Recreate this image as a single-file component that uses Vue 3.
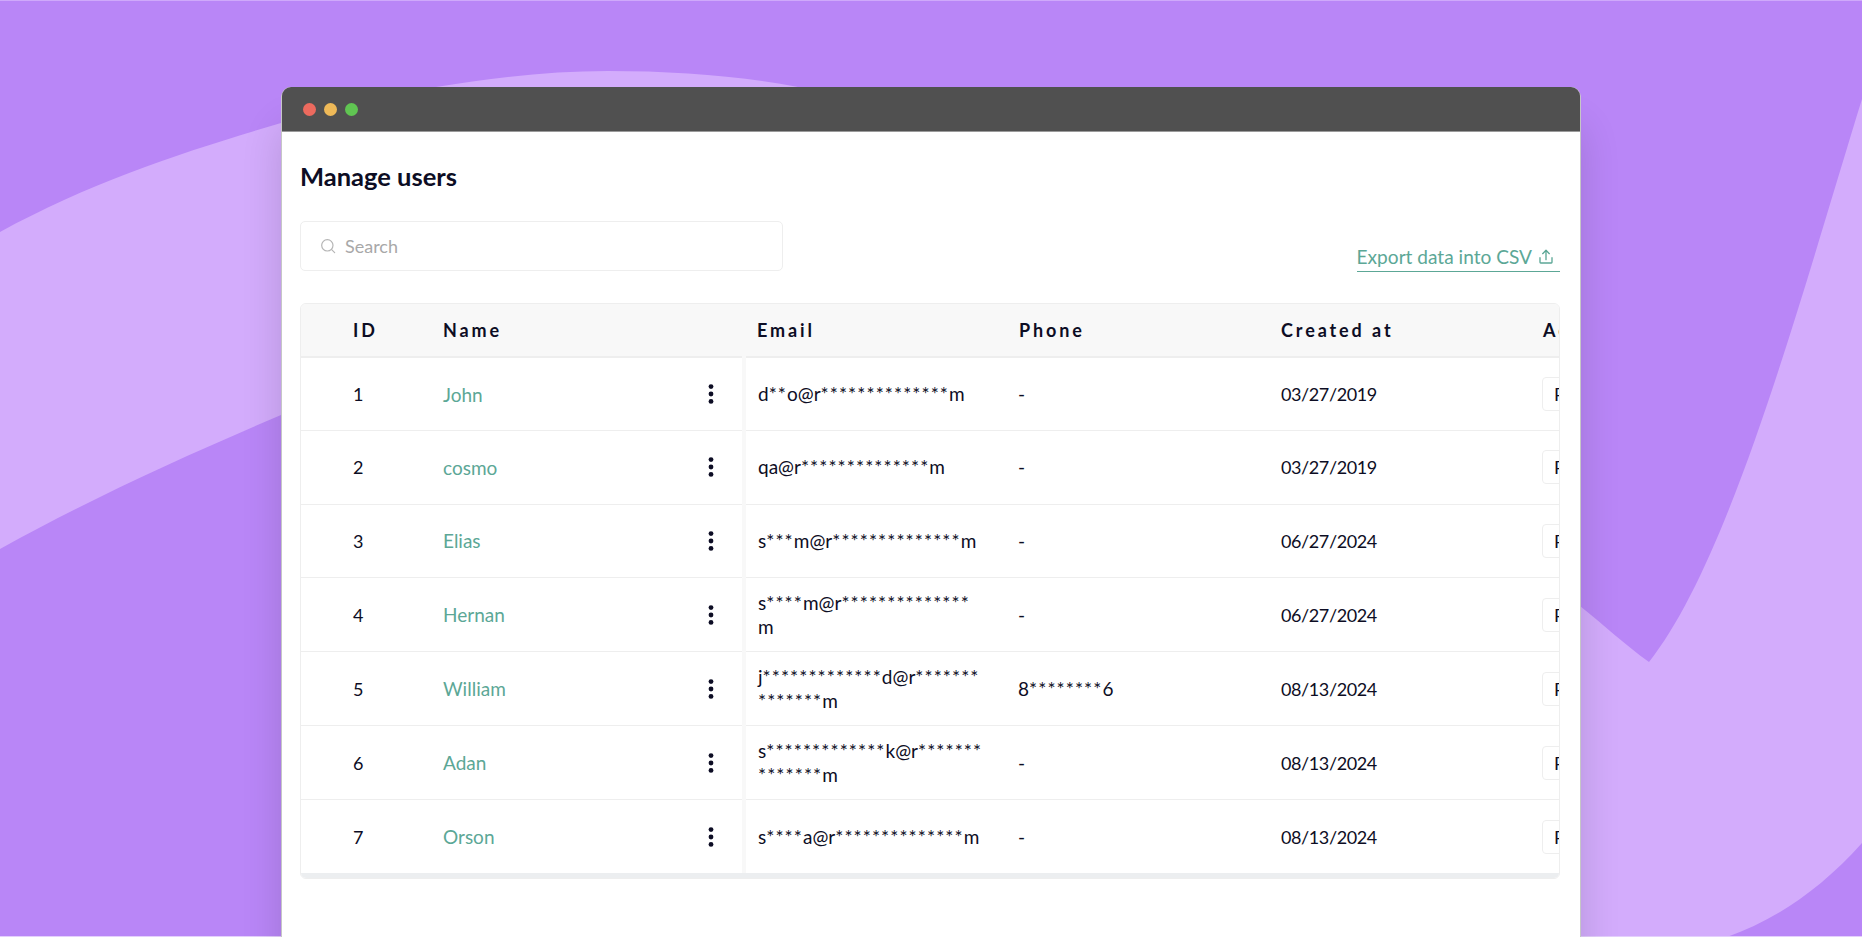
<template>
    <div class="stage">
        <!-- Background waves -->
        <svg class="waves" viewBox="0 0 1862 937" width="1862" height="937">
            <path
                fill="#d3acfc"
                d="M0 232 C95 180 190 150 281 123 C335 107 385 94 436 87 C490 78 550 71 608 71 C675 71 740 76 798 87 C1100 150 1350 420 1580 606 C1603 624 1625 645 1649 662 C1730 560 1800 300 1862 99 L1862 843 C1820 890 1775 920 1727 937 L600 937 L600 300 L281 415 C187 455 94 497 0 549 Z"
            />
        </svg>

        <div class="window">
            <div class="titlebar">
                <span class="dot red"></span>
                <span class="dot yellow"></span>
                <span class="dot green"></span>
            </div>

            <div class="content">
                <h1 class="page-title">Manage users</h1>

                <div class="toolbar">
                    <label class="search">
                        <svg width="16" height="16" viewBox="0 0 24 24" fill="none" stroke="#b5b5b5" stroke-width="1.8" stroke-linecap="round">
                            <circle cx="11" cy="11" r="8.5"></circle>
                            <line x1="17.5" y1="17.5" x2="22" y2="22"></line>
                        </svg>
                        <input type="text" placeholder="Search" />
                    </label>
                    <a class="export-link" href="#">
                        Export data into CSV
                        <svg width="16" height="16" viewBox="0 0 24 24" fill="none" stroke="currentColor" stroke-width="2" stroke-linecap="round" stroke-linejoin="round">
                            <path d="M3 13v7a1 1 0 0 0 1 1h16a1 1 0 0 0 1-1v-7"></path>
                            <polyline points="7 7 12 2 17 7"></polyline>
                            <line x1="12" y1="2" x2="12" y2="16"></line>
                        </svg>
                    </a>
                </div>

                <div class="table-wrap">
                    <table class="users-table">
                        <thead>
                            <tr>
                                <th class="col-id">ID</th>
                                <th class="col-name">Name</th>
                                <th class="col-data">Email</th>
                                <th class="col-data">Phone</th>
                                <th class="col-data">Created at</th>
                                <th class="col-data">Actions</th>
                            </tr>
                        </thead>
                        <tbody>
                            <tr v-for="user in users" :key="user.id">
                                <td class="col-id">{{ user.id }}</td>
                                <td class="col-name">
                                    <div class="name-cell">
                                        <a class="user-link" href="#">{{ user.name }}</a>
                                        <svg class="kebab" width="6" height="20" viewBox="0 0 6 20" fill="#0d0d24">
                                            <circle cx="3" cy="2.6" r="2.4"></circle>
                                            <circle cx="3" cy="10" r="2.4"></circle>
                                            <circle cx="3" cy="17.4" r="2.4"></circle>
                                        </svg>
                                    </div>
                                </td>
                                <td class="masked">
                                    <span v-for="line in user.email" :key="line" class="masked-line">
                                        <span
                                            v-for="(part, i) in splitStars(line)"
                                            :key="i"
                                            :class="{ stars: part.startsWith('*') }"
                                        >{{ part }}</span>
                                    </span>
                                </td>
                                <td class="masked">
                                    <span class="masked-line">
                                        <span
                                            v-for="(part, i) in splitStars(user.phone)"
                                            :key="i"
                                            :class="{ stars: part.startsWith('*') }"
                                        >{{ part }}</span>
                                    </span>
                                </td>
                                <td class="date">{{ user.created }}</td>
                                <td><button class="action-btn" type="button">Reset password</button></td>
                            </tr>
                        </tbody>
                    </table>
                    <div class="scrollbar"></div>
                </div>
            </div>
        </div>
    </div>
</template>

<script setup>
const stars = (n) => '*'.repeat(n);

// asterisk runs get their own span, they need wider spacing than the letters
const splitStars = (text) => text.split(/(\*+)/).filter(Boolean);

const users = [
    { id: 1, name: 'John', email: [`d**o@r${stars(14)}m`], phone: '-', created: '03/27/2019' },
    { id: 2, name: 'cosmo', email: [`qa@r${stars(14)}m`], phone: '-', created: '03/27/2019' },
    { id: 3, name: 'Elias', email: [`s***m@r${stars(14)}m`], phone: '-', created: '06/27/2024' },
    { id: 4, name: 'Hernan', email: [`s****m@r${stars(14)}`, 'm'], phone: '-', created: '06/27/2024' },
    { id: 5, name: 'William', email: [`j${stars(13)}d@r${stars(7)}`, `${stars(7)}m`], phone: `8${stars(8)}6`, created: '08/13/2024' },
    { id: 6, name: 'Adan', email: [`s${stars(13)}k@r${stars(7)}`, `${stars(7)}m`], phone: '-', created: '08/13/2024' },
    { id: 7, name: 'Orson', email: [`s****a@r${stars(14)}m`], phone: '-', created: '08/13/2024' },
];
</script>

<style scoped>
.stage {
    position: relative;
    height: 937px;
    overflow: hidden;
    background: #b986f7;
    font-family: "Lato", "Open Sans", sans-serif;
    color: #0d0d24;
}

/* the screenshot has a faint light edge top and bottom */
.stage::after {
    content: "";
    position: absolute;
    inset: 0;
    border-top: 1px solid #cfa9fb;
    border-bottom: 1px solid #e4cffd;
    pointer-events: none;
}

.waves {
    position: absolute;
    top: 0;
    left: 0;
}

/* Browser window */
.window {
    position: relative;
    z-index: 1;
    width: 1300px;
    height: 850px;
    margin-left: 281px;
    top: 87px;
    box-sizing: border-box;
    background: #fff;
    border-left: 1px solid #c6c6c6;
    border-right: 1px solid #c6c6c6;
    border-radius: 10px 10px 0 0;
    box-shadow: 0 40px 40px rgba(0, 0, 0, 0.14);
}

.titlebar {
    display: flex;
    align-items: center;
    gap: 8px;
    height: 45px;
    padding-left: 21px;
    background: #505050;
    border-bottom: 1px solid #9a9a9a;
    border-radius: 9px 9px 0 0;
    box-sizing: border-box;
}

.dot {
    width: 13px;
    height: 13px;
    border-radius: 50%;
}

.red { background: #ec6a5e; }
.yellow { background: #eeb958; }
.green { background: #60c552; }

.content {
    padding: 0 20px 0 18px;
}

.page-title {
    margin: 0;
    padding-top: 28px;
    font-size: 25.5px;
    line-height: 32px;
    font-weight: 700;
}

/* Search + export */
.toolbar {
    display: flex;
    align-items: flex-end;
    justify-content: space-between;
    margin-top: 29px;
}

.search {
    display: flex;
    align-items: center;
    gap: 9px;
    width: 483px;
    height: 50px;
    padding-left: 19px;
    box-sizing: border-box;
    border: 1px solid #eeeeee;
    border-radius: 5px;
}

.search input {
    flex: 1;
    border: none;
    outline: none;
    padding: 0;
    font-family: inherit;
    font-size: 18px;
}

.search input::placeholder {
    color: #a8a8a8;
}

.export-link {
    display: flex;
    align-items: center;
    gap: 6px;
    margin-bottom: -1px;
    padding: 0 6px 2px 0;
    font-size: 19.1px;
    line-height: 24px;
    color: #5ca796;
    text-decoration: none;
    border-bottom: 1px solid #5ca796;
}

/* Table */
.table-wrap {
    margin-top: 32px;
    width: 1260px;
    overflow: hidden;
    border: 1px solid #eeeeee;
    border-radius: 6px;
    box-sizing: border-box;
}

.users-table {
    table-layout: fixed;
    border-collapse: collapse;
    width: 1491px;
    font-size: 18px;
}

.users-table th {
    height: 53px;
    padding: 0 13px;
    text-align: left;
    font-weight: 700;
    letter-spacing: 2.9px;
    background: #f8f8f8;
    border-bottom: 2px solid #eeeeee;
    box-sizing: border-box;
}

.users-table td {
    height: 73.6px;
    padding: 12.5px 13px;
    border-bottom: 1px solid #eeeeee;
    box-sizing: border-box;
}

.users-table tr:last-child td {
    border-bottom: none;
}

.users-table .col-id {
    width: 129px;
    padding-left: 52px;
}

.users-table .col-name {
    width: 314px;
}

.users-table td.col-name {
    border-right: 4px solid #f8f8f8;
}

.col-data {
    width: 262px;
}

.name-cell {
    display: flex;
    align-items: center;
    justify-content: space-between;
    padding-right: 15px;
}

.user-link {
    font-size: 19px;
    color: #5ca796;
    text-decoration: none;
}

.kebab {
    flex-shrink: 0;
}

.masked {
    font-size: 19px;
}

.users-table td.masked {
    padding-left: 12px;
}

.masked-line {
    display: block;
    line-height: 24px;
    white-space: nowrap;
}

.stars {
    letter-spacing: 1.1px;
}

.date {
    letter-spacing: -0.4px;
}

.action-btn {
    height: 34px;
    margin-left: -1px;
    padding: 0 11px;
    white-space: nowrap;
    font-family: inherit;
    font-size: 18px;
    color: #0d0d24;
    background: #fff;
    border: 1px solid #eeeeee;
    border-radius: 4px;
}

.scrollbar {
    height: 5px;
    background: #eceef0;
}
</style>
